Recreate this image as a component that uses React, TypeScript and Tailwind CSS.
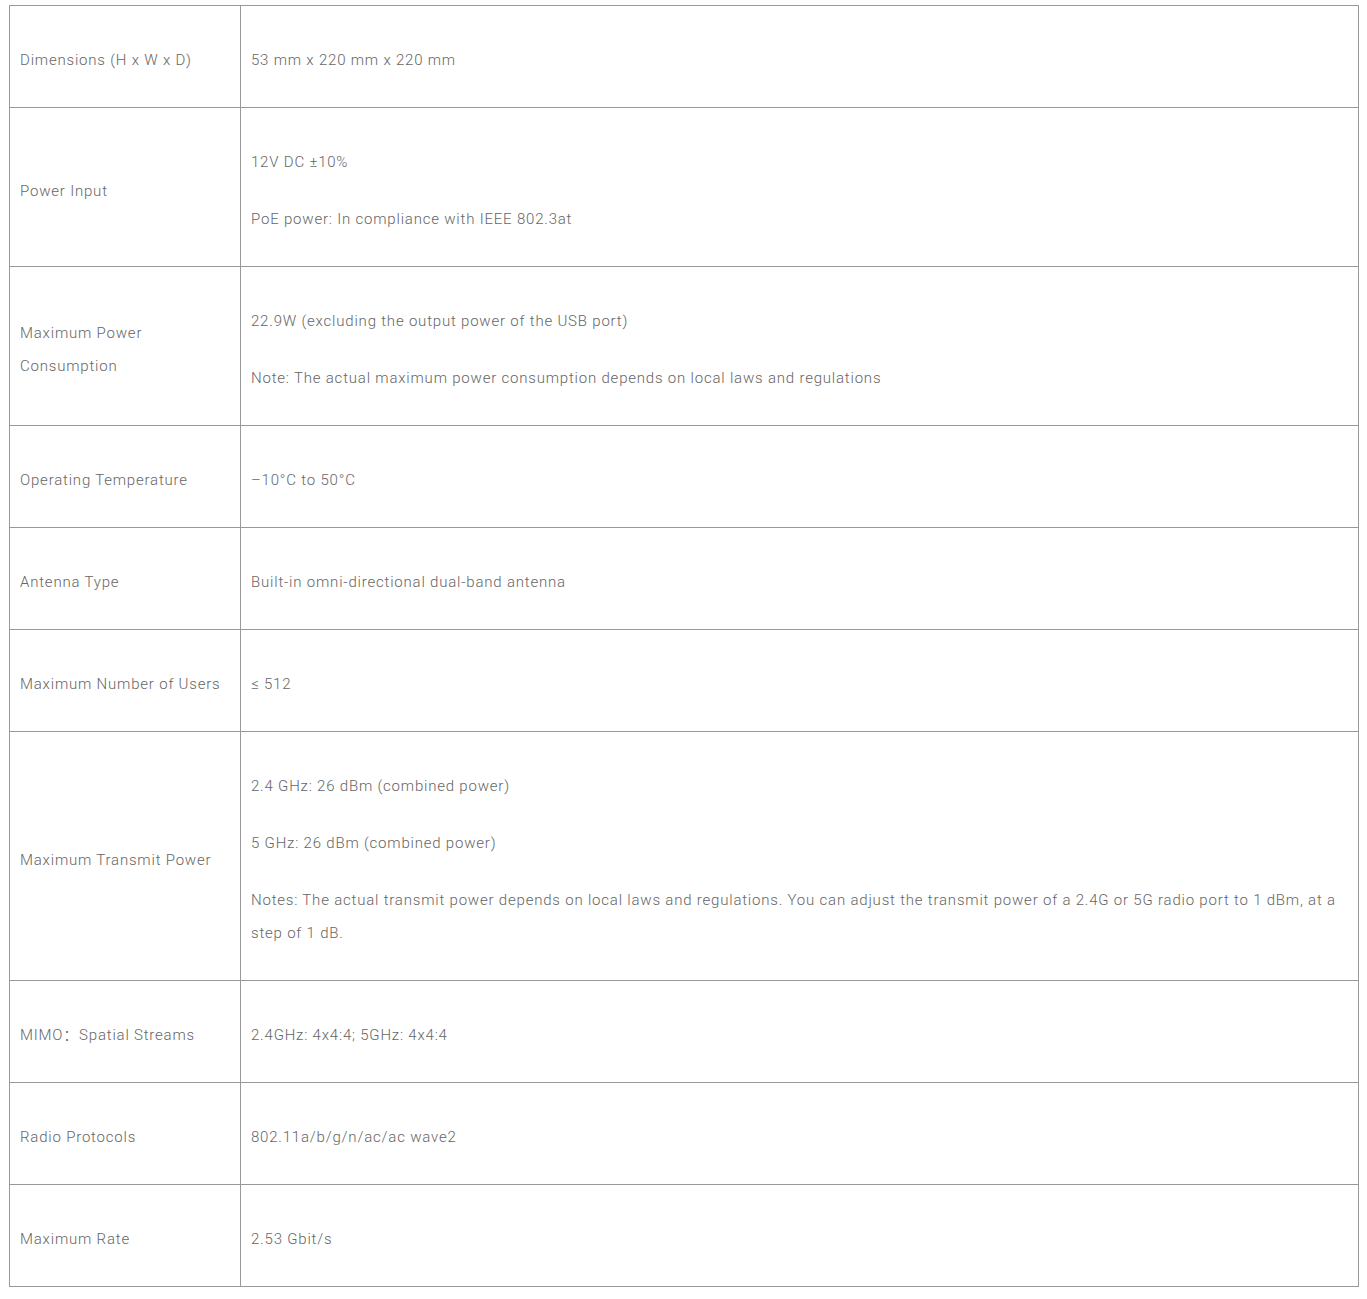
const specs: { label: string[]; value: string[] }[] = [
  { label: ["Dimensions (H x W x D)"], value: ["53 mm x 220 mm x 220 mm"] },
  { label: ["Power Input"], value: ["12V DC ±10%", "PoE power: In compliance with IEEE 802.3at"] },
  {
    label: ["Maximum Power", "Consumption"],
    value: [
      "22.9W (excluding the output power of the USB port)",
      "Note: The actual maximum power consumption depends on local laws and regulations",
    ],
  },
  { label: ["Operating Temperature"], value: ["–10°C to 50°C"] },
  { label: ["Antenna Type"], value: ["Built-in omni-directional dual-band antenna"] },
  { label: ["Maximum Number of Users"], value: ["≤ 512"] },
  {
    label: ["Maximum Transmit Power"],
    value: [
      "2.4 GHz: 26 dBm (combined power)",
      "5 GHz: 26 dBm (combined power)",
      "Notes: The actual transmit power depends on local laws and regulations. You can adjust the transmit power of a 2.4G or 5G radio port to 1 dBm, at a step of 1 dB.",
    ],
  },
  { label: ["MIMO：Spatial Streams"], value: ["2.4GHz: 4x4:4; 5GHz: 4x4:4"] },
  { label: ["Radio Protocols"], value: ["802.11a/b/g/n/ac/ac wave2"] },
  { label: ["Maximum Rate"], value: ["2.53 Gbit/s"] },
];

export default function App() {
  return (
    <div className="min-h-screen bg-white pl-[9px] pt-[5px] pb-[12px]">
      <table
        className="w-[1350px] border-collapse text-[15px] leading-[33px] font-light tracking-[0.8px] text-[#666]"
        style={{ fontFamily: "Roboto, 'Noto Sans CJK SC', 'Liberation Sans', sans-serif" }}
      >
        <tbody>
          {specs.map((row) => (
            <tr key={row.label.join(" ")}>
              <td className="w-[231px] border border-[#999] px-[10px] pt-[14px] pb-[6px] align-middle">
                <div className="py-6">
                  {row.label.map((l) => (
                    <div key={l}>{l}</div>
                  ))}
                </div>
              </td>
              <td className="border border-[#999] pl-[10px] pr-[8px] pt-[14px] pb-[6px] align-middle">
                <div className="flex flex-col gap-6 py-6">
                  {row.value.map((v) => (
                    <p key={v}>{v}</p>
                  ))}
                </div>
              </td>
            </tr>
          ))}
        </tbody>
      </table>
    </div>
  );
}
